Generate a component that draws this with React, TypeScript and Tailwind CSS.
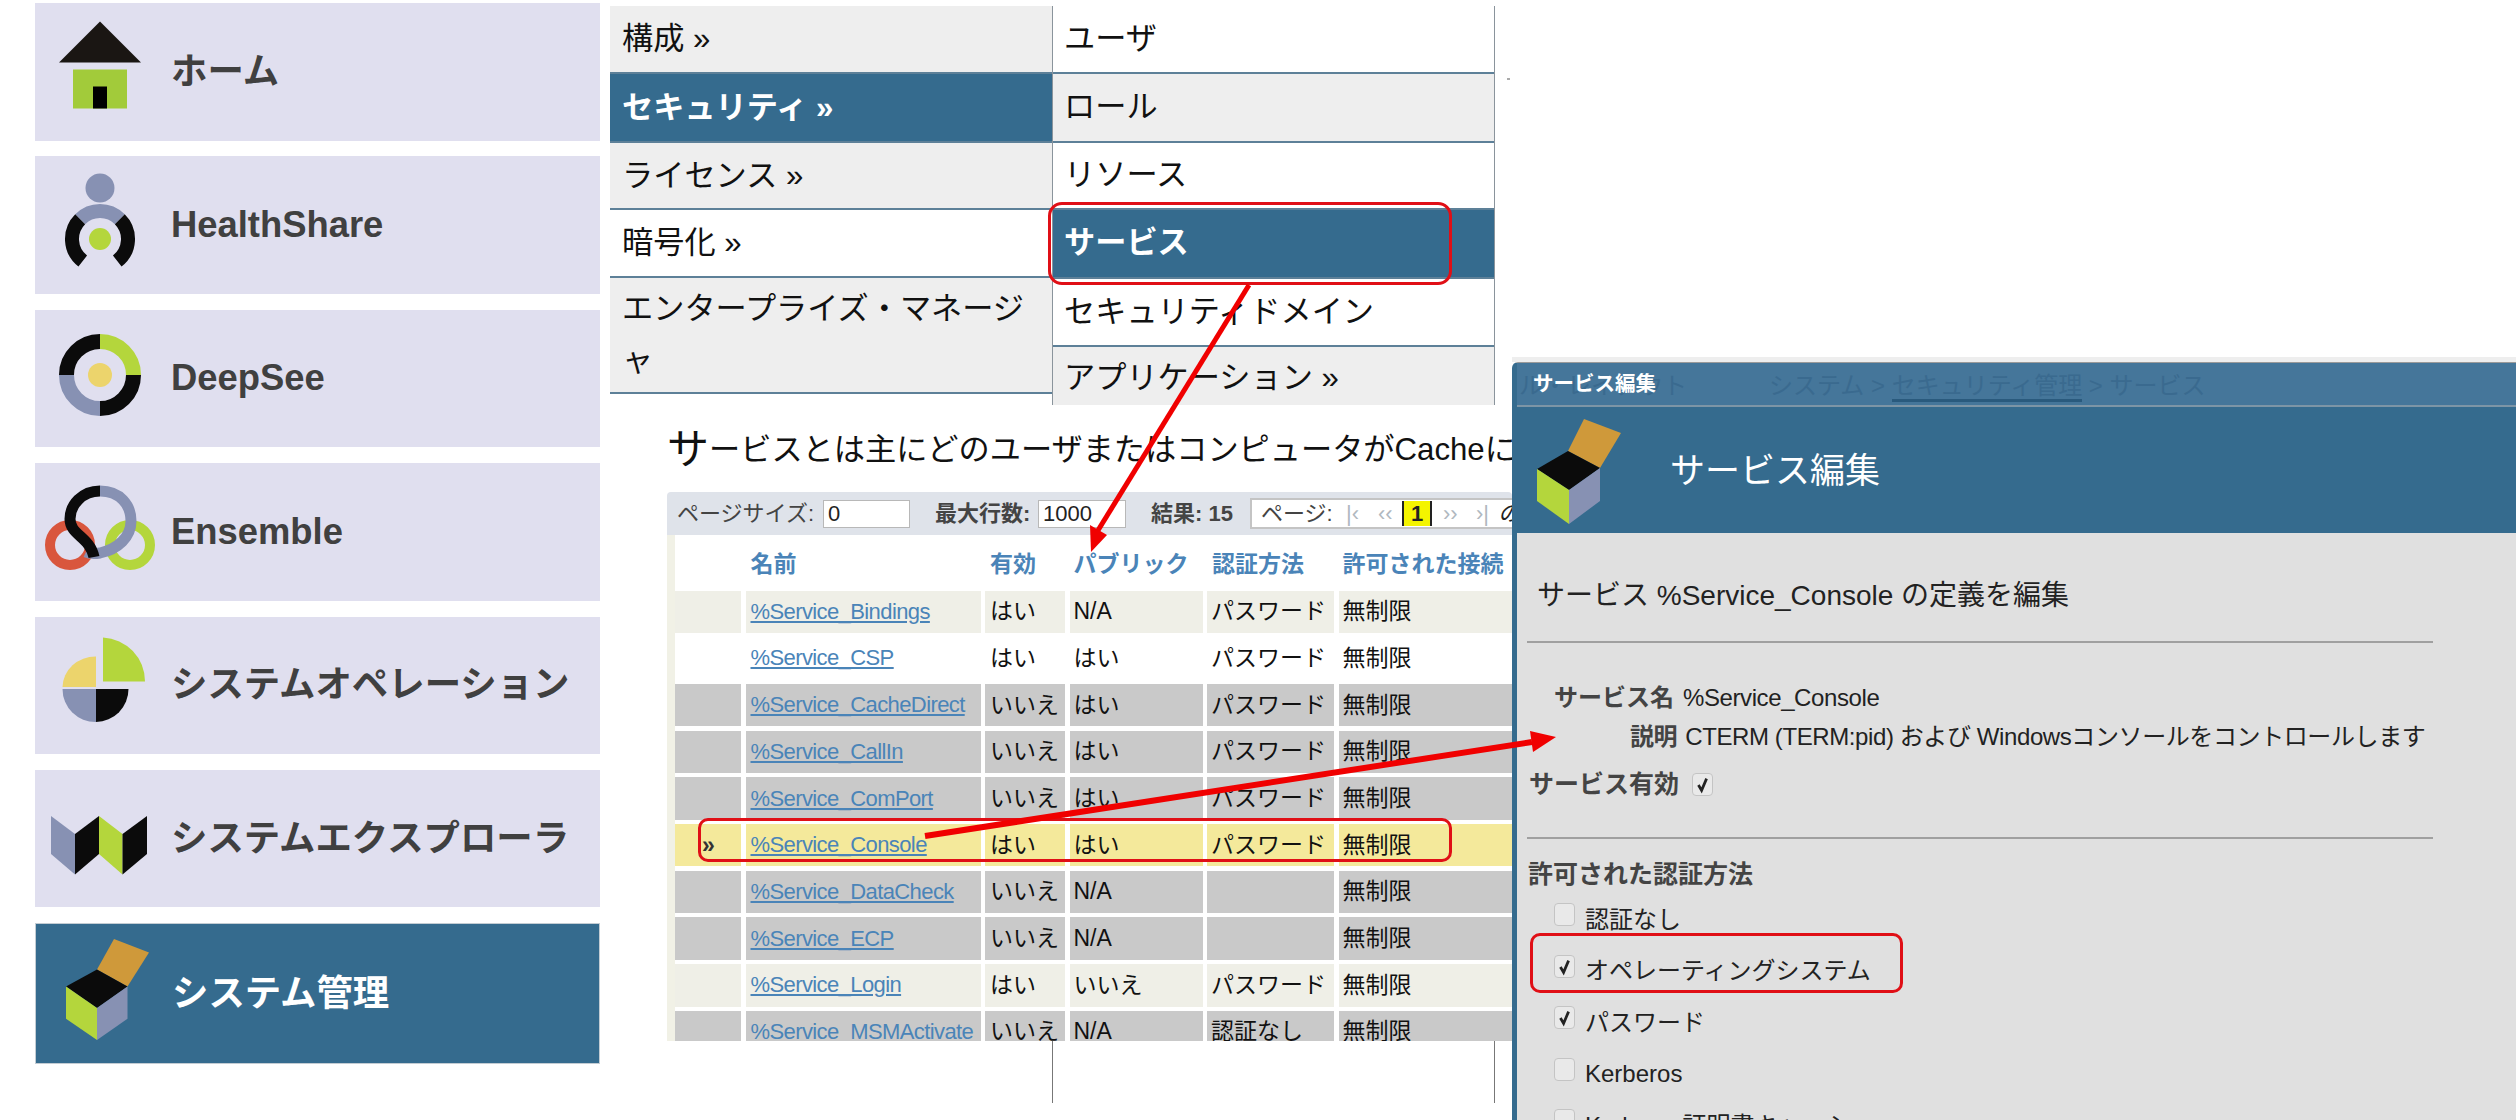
const FONT = '[font-family:"Liberation_Sans","Noto_Sans_CJK_JP",sans-serif]';

const BLACK = '#0b0b0b';
const GREEN = '#b4d63c';
const GRAY = '#8791b3';
const YELLOW = '#ecd46c';

function polar(cx: number, cy: number, r: number, deg: number) {
  const a = ((deg - 90) * Math.PI) / 180;
  return [cx + r * Math.cos(a), cy + r * Math.sin(a)];
}

function arc(cx: number, cy: number, r: number, from: number, to: number) {
  const [x1, y1] = polar(cx, cy, r, from);
  const [x2, y2] = polar(cx, cy, r, to);
  const large = to - from > 180 ? 1 : 0;
  return `M${x1} ${y1}A${r} ${r} 0 ${large} 1 ${x2} ${y2}`;
}

function HomeIcon() {
  return (
    <>
      <polygon points="56,4.5 97,45.5 15,45.5" fill="#1a1613" />
      <rect x="29" y="52.5" width="54" height="39" fill="#a2cb3a" />
      <rect x="49" y="69.5" width="14" height="22" fill="#000" />
    </>
  );
}

function HealthIcon() {
  return (
    <>
      <circle cx="56" cy="18" r="14.5" fill={GRAY} />
      <path d={arc(56, 69, 28, -45, 45)} fill="none" stroke={GRAY} strokeWidth="14" />
      <path d={arc(56, 69, 28, 45, 142)} fill="none" stroke={BLACK} strokeWidth="14" />
      <path d={arc(56, 69, 28, 218, 315)} fill="none" stroke={BLACK} strokeWidth="14" />
      <circle cx="56" cy="69" r="11" fill={GREEN} />
    </>
  );
}

function DeepSeeIcon() {
  return (
    <>
      <path d={arc(56, 51, 33.5, 0, 90)} fill="none" stroke={GREEN} strokeWidth="15" />
      <path d={arc(56, 51, 33.5, 90, 180)} fill="none" stroke={BLACK} strokeWidth="15" />
      <path d={arc(56, 51, 33.5, 180, 270)} fill="none" stroke={GRAY} strokeWidth="15" />
      <path d={arc(56, 51, 33.5, 270, 360)} fill="none" stroke={BLACK} strokeWidth="15" />
      <circle cx="56" cy="51" r="12" fill={YELLOW} />
    </>
  );
}

function EnsembleIcon() {
  return (
    <>
      <circle cx="26" cy="68" r="20" fill="none" stroke="#d9563d" strokeWidth="10" />
      <circle cx="86" cy="68" r="20" fill="none" stroke={GREEN} strokeWidth="10" />
      <path d="M56 14C76 14 87 28 87 44C87 60 74 72 56 76C50 77 46 77 42 75" fill="none" stroke={GRAY} strokeWidth="11" />
      <path d="M56 14C38 14 26 28 26 42C26 58 46 60 50 80" fill="none" stroke={BLACK} strokeWidth="11" />
    </>
  );
}

function OperationIcon() {
  return (
    <>
      <path d="M59 51.5V7.5A44 44 0 0 1 101 51.5Z" fill={GREEN} />
      <path d="M52 57V26.5A33 31 0 0 0 18.5 57Z" fill={YELLOW} />
      <path d="M52 59V92A33 33 0 0 1 18.5 59Z" fill={GRAY} />
      <path d="M52 59V92A33 33 0 0 0 84.5 59Z" fill={BLACK} />
    </>
  );
}

function ExplorerIcon() {
  return (
    <>
      <polygon points="7,32 31,50 31,90.6 7,70" fill={GRAY} />
      <polygon points="31,50 55,32 55,70 31,90.6" fill={BLACK} />
      <polygon points="55,32 78.5,50 78.5,90.6 55,70" fill={GREEN} />
      <polygon points="78.5,50 103,32 103,70 78.5,90.6" fill={BLACK} />
    </>
  );
}

function AdminIcon() {
  return (
    <>
      <polygon points="69,0 104,13.5 82.5,47.5 52,30.5" fill="#cf993a" />
      <polygon points="52,30.5 82.5,47.5 52,69 21,47.5" fill={BLACK} />
      <polygon points="21,47.5 52,69 52,101 21,79.7" fill={GREEN} />
      <polygon points="52,69 82.5,47.5 82.5,79.7 52,101" fill={GRAY} />
    </>
  );
}

const NAV = [
  { label: 'ホーム', icon: <HomeIcon /> },
  { label: 'HealthShare', icon: <HealthIcon /> },
  { label: 'DeepSee', icon: <DeepSeeIcon /> },
  { label: 'Ensemble', icon: <EnsembleIcon /> },
  { label: 'システムオペレーション', icon: <OperationIcon /> },
  { label: 'システムエクスプローラ', icon: <ExplorerIcon /> },
  { label: 'システム管理', icon: <AdminIcon />, active: true },
];

function Sidebar() {
  return (
    <div className="ml-[35px] flex w-[565px] shrink-0 flex-col gap-[15.9px] pt-[3px]">
      {NAV.map((item) => (
        <div
          key={item.label}
          className={`flex items-center pl-[9px] ${
            item.active ? 'h-[141px] border border-[#c3ccd3] bg-[#356b8e] text-white' : 'h-[137.5px] bg-[#e0dfef] text-[#404040]'
          }`}
        >
          <svg viewBox="0 0 110 110" className="h-[110px] w-[110px] shrink-0 overflow-visible">
            {item.icon}
          </svg>
          <span className="ml-[17px] text-[36.4px] leading-none font-bold">{item.label}</span>
        </div>
      ))}
    </div>
  );
}

const MENU_LEFT = [
  { label: '構成 »', h: 'h-[68px]', bg: 'bg-[#eeeeee]' },
  { label: 'セキュリティ »', h: 'h-[69px]', bg: 'bg-[#356b8e] text-white font-bold' },
  { label: 'ライセンス »', h: 'h-[67px]', bg: 'bg-[#eeeeee]' },
  { label: '暗号化 »', h: 'h-[68px]', bg: 'bg-white' },
  { label: 'エンタープライズ・マネージャ', h: 'h-[116px]', bg: 'bg-[#eeeeee]' },
];

const MENU_RIGHT = [
  { label: 'ユーザ', h: 'h-[68px]', bg: 'bg-white' },
  { label: 'ロール', h: 'h-[69px]', bg: 'bg-[#eeeeee]' },
  { label: 'リソース', h: 'h-[67px]', bg: 'bg-white' },
  { label: 'サービス', h: 'h-[69px]', bg: 'bg-[#356b8e] text-white font-bold' },
  { label: 'セキュリティドメイン', h: 'h-[68px]', bg: 'bg-white' },
  { label: 'アプリケーション »', h: 'h-[58px] pt-[5px]', bg: 'bg-[#eeeeee]' },
];

function Menu() {
  return (
    <div className="flex w-[885px] items-start pt-[6px] text-[31.2px] text-[#111]">
      <div className="w-[442px] shrink-0">
        {MENU_LEFT.map((m) => (
          <div key={m.label} className={`${m.h} ${m.bg} flex items-center border-b-2 border-[#5d8098] pr-[20px] pl-[12px] leading-[52px]`}>
            <span>{m.label}</span>
          </div>
        ))}
      </div>
      <div className="w-[443px] shrink-0 border-x border-[#8a949c]">
        {MENU_RIGHT.map((m, i) => (
          <div
            key={m.label}
            className={`${m.h} ${m.bg} flex items-center pl-[11px] ${i < 5 ? 'border-b-2 border-[#5d8098]' : ''}`}
          >
            {m.label}
          </div>
        ))}
      </div>
    </div>
  );
}

function Toolbar() {
  return (
    <div className="flex h-[43px] w-[845px] items-center overflow-hidden rounded-t-[4px] bg-[#dfe3ea] pl-[10px] text-[22px] leading-none whitespace-nowrap text-[#444]">
      <span className="w-[146px] shrink-0">ページサイズ:</span>
      <div className="flex h-[28px] w-[87px] shrink-0 items-center border border-[#b8b8b8] bg-white pl-[4px] text-[#222]">0</div>
      <span className="ml-[25px] w-[103px] shrink-0 font-bold">最大行数:</span>
      <div className="flex h-[28px] w-[88px] shrink-0 items-center border border-[#b8b8b8] bg-white pl-[4px] text-[#222]">1000</div>
      <span className="ml-[25px] w-[99px] shrink-0 font-bold">結果: 15</span>
      <div className="flex h-[31px] w-[300px] shrink-0 items-center border-2 border-[#c4c4c4] bg-white pl-[9px]">
        <span className="w-[85px] shrink-0">ページ:</span>
        <span className="w-[32px] shrink-0 text-[#b0b8c0]">|‹</span>
        <span className="w-[24px] shrink-0 text-[#b0b8c0]">‹‹</span>
        <span className="flex h-[25px] w-[30px] shrink-0 items-center justify-center border-x-2 border-[#222] bg-[#f4f400] font-bold text-[#222]">1</span>
        <span className="ml-[11px] w-[33px] shrink-0 text-[#b0b8c0]">››</span>
        <span className="w-[22px] shrink-0 text-[#b0b8c0]">›|</span>
        <span className="text-[#222] italic">の</span>
      </div>
    </div>
  );
}

const ROW_GRID = 'grid grid-cols-[66px_235px_80px_133px_127px_174px] gap-x-[4.5px] h-[42.5px]';

const ROWS = [
  { name: '%Service_Bindings', on: 'はい', pub: 'N/A', auth: 'パスワード', bg: 'bg-[#efefe7]' },
  { name: '%Service_CSP', on: 'はい', pub: 'はい', auth: 'パスワード', bg: 'bg-white' },
  { name: '%Service_CacheDirect', on: 'いいえ', pub: 'はい', auth: 'パスワード', bg: 'bg-[#c9c9c9]' },
  { name: '%Service_CallIn', on: 'いいえ', pub: 'はい', auth: 'パスワード', bg: 'bg-[#c9c9c9]' },
  { name: '%Service_ComPort', on: 'いいえ', pub: 'はい', auth: 'パスワード', bg: 'bg-[#c9c9c9]' },
  { name: '%Service_Console', on: 'はい', pub: 'はい', auth: 'パスワード', bg: 'bg-[#f4e99b]', mark: '»' },
  { name: '%Service_DataCheck', on: 'いいえ', pub: 'N/A', auth: '', bg: 'bg-[#c9c9c9]' },
  { name: '%Service_ECP', on: 'いいえ', pub: 'N/A', auth: '', bg: 'bg-[#c9c9c9]' },
  { name: '%Service_Login', on: 'はい', pub: 'いいえ', auth: 'パスワード', bg: 'bg-[#efefe7]' },
  { name: '%Service_MSMActivate', on: 'いいえ', pub: 'N/A', auth: '認証なし', bg: 'bg-[#c9c9c9]' },
];

function ServiceTable() {
  return (
    <div className="ml-[57px] w-[845px] overflow-hidden">
      <Toolbar />
      <div className="h-[506px] overflow-hidden border-l-[8px] border-[#f1f1e6] bg-white pt-[8px] text-[23px] leading-none whitespace-nowrap text-[#111]">
        <div className={`${ROW_GRID} font-bold text-[#4a84b8]`}>
          <div />
          <div className="flex items-center pl-[5px]">名前</div>
          <div className="flex items-center pl-[5px]">有効</div>
          <div className="flex items-center pl-[4px]">パブリック</div>
          <div className="flex items-center pl-[5px]">認証方法</div>
          <div className="flex items-center pl-[4px]">許可された接続</div>
        </div>
        <div className="mt-[5px] flex flex-col gap-y-[4.2px]">
          {ROWS.map((r) => (
            <div key={r.name} className={ROW_GRID}>
              <div className={`${r.bg} flex items-center pl-[27px] font-bold text-[#333]`}>{r.mark}</div>
              <div className={`${r.bg} flex items-center pl-[5px] text-[22px] tracking-[-0.6px] text-[#4a84b8] underline`}>{r.name}</div>
              <div className={`${r.bg} flex items-center pl-[5px]`}>{r.on}</div>
              <div className={`${r.bg} flex items-center pl-[4px]`}>{r.pub}</div>
              <div className={`${r.bg} flex items-center pl-[4px]`}>{r.auth}</div>
              <div className={`${r.bg} flex items-center pl-[4px]`}>無制限</div>
            </div>
          ))}
        </div>
      </div>
    </div>
  );
}

function Check({ checked, className = '' }: { checked?: boolean; className?: string }) {
  return (
    <span className={`flex h-[23px] w-[21px] shrink-0 items-center justify-center rounded-[4px] border border-[#c4c4c4] bg-[#e9e9e9] ${className}`}>
      {checked && (
        <svg viewBox="0 0 21 23" className="h-[23px] w-[21px]">
          <path d="M6 12l3.5 6L15 5" fill="none" stroke="#222" strokeWidth="3" />
        </svg>
      )}
    </span>
  );
}

function CheckRow({ label, checked }: { label: string; checked?: boolean }) {
  return (
    <div className="flex h-[51.5px] items-center pl-[27px] text-[24px] text-[#222]">
      <Check checked={checked} className="-mt-[10px]" />
      <span className="ml-[10px] leading-none whitespace-nowrap">{label}</span>
    </div>
  );
}

function ServiceModal() {
  return (
    <div className="mt-[357px] h-[763px] min-w-0 flex-1 overflow-hidden border-t-[5px] border-[#eeeeee]">
      <div className="h-full rounded-tl-[6px] border-t border-l-[5px] border-t-[#9a9a9a] border-l-[#356b8e] bg-[#e0e0e0]">
        {/* Title bar with the page behind it showing through */}
        <div className="relative flex h-[44px] items-center border-b-2 border-[#7d95a6] bg-[#45769a] pl-[16px] whitespace-nowrap">
          <span className="absolute top-[11px] left-[2px] text-[24px] leading-none text-[#3a6a8f]">ル・レイアウト</span>
          <span className="absolute top-[11px] left-[252px] text-[24px] leading-none text-[#3a6a8f]">
            システム &gt; <span className="border-b-[3px] border-[#2a5a7d]">セキュリティ管理</span> &gt; サービス
          </span>
          <span className="relative text-[20.5px] font-bold text-white">サービス編集</span>
        </div>
        <div className="flex h-[126px] items-center bg-[#356b8e]">
          <svg viewBox="1530 408 100 112" className="ml-[13px] h-[112px] w-[100px] shrink-0">
            <polygon points="1584,413 1621,427 1600,462 1568,445" fill="#cf993a" />
            <polygon points="1568,445 1600,462 1569,484 1537,463" fill={BLACK} />
            <polygon points="1537,463 1569,484 1569,518 1537,495" fill={GREEN} />
            <polygon points="1569,484 1600,462 1600,495 1569,518" fill={GRAY} />
          </svg>
          <span className="ml-[40px] text-[35px] leading-none text-white">サービス編集</span>
        </div>
        <div className="ml-[10px] w-[906px]">
          <div className="flex h-[110px] items-center border-b-2 border-[#a0a0a0] pt-[18px] pl-[10px] text-[28px] leading-none text-[#222]">
            サービス %Service_Console の定義を編集
          </div>
          <div className="mt-[35px] ml-[27px] flex h-[39px] items-center text-[24px] leading-none text-[#222]">
            <span className="font-bold text-[#444]">サービス名</span>
            <span className="ml-[9px] tracking-[-0.4px]">%Service_Console</span>
          </div>
          <div className="ml-[103px] flex h-[39px] items-center text-[24px] leading-none tracking-[-0.4px] whitespace-nowrap text-[#222]">
            <span className="font-bold text-[#444]">説明</span>
            <span className="ml-[8px]">CTERM (TERM:pid) および Windowsコンソールをコントロールします</span>
          </div>
          <div className="flex h-[57px] items-center pl-[2px] text-[25px] leading-none">
            <span className="font-bold text-[#444]">サービス有効</span>
            <Check checked className="ml-[13px]" />
          </div>
          <div className="mt-[24px] border-t-2 border-[#a0a0a0]" />
          <div className="flex h-[64px] items-center pt-[7px] pl-[1px] text-[25px] leading-none font-bold text-[#444]">許可された認証方法</div>
          <div className="-mt-[9px]">
            <CheckRow label="認証なし" />
            <CheckRow label="オペレーティングシステム" checked />
            <CheckRow label="パスワード" checked />
            <CheckRow label="Kerberos" />
            <CheckRow label="Kerberos証明書キャッシュ" />
          </div>
        </div>
      </div>
    </div>
  );
}

export default function App() {
  return (
    <div className={`relative flex h-[1120px] w-[2516px] overflow-hidden bg-white ${FONT}`}>
      <Sidebar />
      <div className="ml-[10px] w-[902px] shrink-0">
        <Menu />
        <div className="ml-[57px] flex h-[87px] items-center overflow-hidden pt-[2px] text-[31.2px] leading-none whitespace-nowrap text-[#111]">
          <span className="text-[42px]">サ</span>
          <span>ービスとは主にどのユーザまたはコンピュータがCacheに</span>
        </div>
        <ServiceTable />
        <div className="ml-[442px] h-[62px] w-[443px] border-x border-[#777]" />
      </div>
      <ServiceModal />

      {/* Red callouts drawn over the screenshots */}
      <div className="absolute top-[78px] left-[1507px] h-[2px] w-[3px] bg-[#aaaaaa]" />
      <div className="absolute top-[202px] left-[1048px] h-[83px] w-[404px] rounded-[14px] border-[3px] border-[#e00f16]" />
      <div className="absolute top-[818px] left-[698px] h-[44px] w-[754px] rounded-[10px] border-[3px] border-[#e00f16]" />
      <div className="absolute top-[933px] left-[1530px] h-[60px] w-[373px] rounded-[10px] border-[3px] border-[#e00f16]" />
      <svg className="pointer-events-none absolute top-0 left-0" width="2516" height="1120">
        <line x1="1249" y1="285" x2="1097" y2="532" stroke="#f00000" strokeWidth="5" />
        <polygon points="1091,552 1090,525 1107,535" fill="#f00000" />
        <line x1="925" y1="836" x2="1532" y2="742" stroke="#f00000" strokeWidth="6" />
        <polygon points="1556,737 1530,731 1533,752" fill="#f00000" />
      </svg>
    </div>
  );
}
